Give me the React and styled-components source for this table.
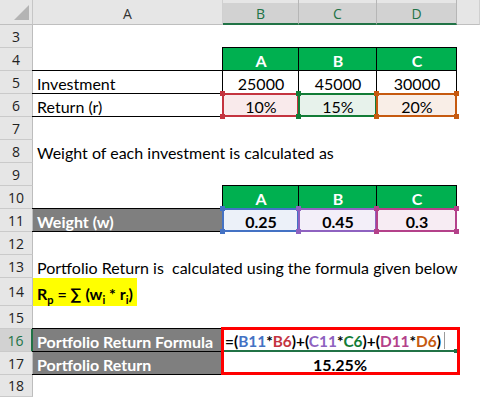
import React from "react";
import styled, { createGlobalStyle } from "styled-components";

const GlobalStyle = createGlobalStyle`
  html, body {
    margin: 0;
    padding: 0;
    background: #ffffff;
  }
`;

const CELL_FONT = `"Lato", "Open Sans", sans-serif`;
const HEAD_FONT = `"Open Sans", "Noto Sans", sans-serif`;
const EXCEL_GREEN = "#217346";

const tones = {
  blue: "#4472c4",
  red: "#c4343f",
  purple: "#8e62c0",
  green: "#127c36",
  magenta: "#b4418a",
  orange: "#c65a10",
};

const Sheet = styled.div`
  display: grid;
  grid-template-columns: 33px 190px 76px 78px 80px 23px;
  grid-template-rows: 25px repeat(11, 23px) 28px 23px 23px 23px 22px;
  width: 480px;
  height: 397px;
  overflow: hidden;
  background: #ffffff;
  font-family: ${CELL_FONT};
`;

const Corner = styled.div`
  grid-column: 1;
  grid-row: 1;
  display: flex;
  align-items: flex-end;
  justify-content: flex-end;
  padding: 0 3px 4px 0;
  background: #e6e6e6;
  border-right: 1px solid #c6c6c6;
  border-bottom: 1px solid #bfbfbf;
  box-sizing: border-box;
`;

const ColHead = styled.div`
  grid-column: ${(p) => p.$col};
  grid-row: 1;
  display: flex;
  align-items: center;
  justify-content: center;
  box-sizing: border-box;
  padding-top: 3px;
  font-family: ${HEAD_FONT};
  font-size: 14px;
  color: ${(p) => (p.$active ? EXCEL_GREEN : "#333333")};
  background: ${(p) => (p.$active ? "#d2d2d2" : "#e6e6e6")};
  box-shadow: inset 0 3px 0 #e6e6e6;
  border-right: 1px solid ${(p) => (p.$active ? "#b6b6b6" : "#d0d0d0")};
  border-bottom: ${(p) => (p.$active ? `2px solid ${EXCEL_GREEN}` : "1px solid #bfbfbf")};
`;

const RowHead = styled.div`
  grid-column: 1;
  grid-row: ${(p) => p.$row - 1};
  display: flex;
  align-items: center;
  justify-content: center;
  box-sizing: border-box;
  font-family: ${HEAD_FONT};
  font-size: 14px;
  color: ${(p) => (p.$active ? EXCEL_GREEN : "#222222")};
  background: ${(p) => (p.$active ? "#d2d2d2" : "#e6e6e6")};
  border-bottom: 1px solid #cacaca;
  border-right: ${(p) => (p.$active ? `2px solid ${EXCEL_GREEN}` : "1px solid #bdbdbd")};
`;

const Cell = styled.div`
  grid-column: ${(p) => p.$col} / span ${(p) => p.$span || 1};
  grid-row: ${(p) => p.$row - 1} / span ${(p) => p.$rows || 1};
  position: relative;
  display: flex;
  align-items: center;
  justify-content: ${(p) => (p.$center ? "center" : "flex-start")};
  padding: ${(p) => (p.$flush ? "0" : "2px 4px 0")};
  min-width: 0;
  white-space: nowrap;
  font-size: 16px;
  font-weight: ${(p) => (p.$bold ? 700 : 400)};
  color: ${(p) => p.$fg || "#000000"};
  background: ${(p) => p.$bg || "transparent"};

  &::after {
    content: "";
    position: absolute;
    inset: -1px 0 0 -1px;
    pointer-events: none;
    border-top: ${(p) => (p.$edges?.includes("t") ? "1px solid #000" : "0")};
    border-bottom: ${(p) => (p.$edges?.includes("b") ? "1px solid #000" : "0")};
    border-left: ${(p) => (p.$edges?.includes("l") ? "1px solid #000" : "0")};
    border-right: ${(p) => (p.$edges?.includes("r") ? "1px solid #000" : "0")};
  }
`;

const HeaderCell = styled(Cell).attrs({ $center: true, $bold: true, $edges: "tblr" })`
  background: #00b050;
  color: #ffffff;
`;

const LabelCell = styled(Cell).attrs({ $bold: true, $edges: "tb" })`
  background: #7f7f7f;
  color: #ffffff;
`;

const RefCell = styled(Cell).attrs({ $center: true })`
  background: ${(p) => tones[p.$tone]}1a;

  &::after {
    border: 2px solid ${(p) => tones[p.$tone]};
  }
`;

const Handle = styled.span`
  position: absolute;
  z-index: 1;
  width: 5px;
  height: 5px;
  background: ${(p) => tones[p.$tone]};
  ${(p) => (p.$pos.includes("t") ? "top: -3px;" : "bottom: -2px;")}
  ${(p) => (p.$pos.includes("l") ? "left: -3px;" : "right: -2px;")}
`;

const Marker = styled.span`
  display: flex;
  align-items: center;
  height: 100%;
  padding: 2px 4px 0;
  box-sizing: border-box;
  background: #ffff00;
  font-weight: 700;
`;

const Sub = styled.sub`
  font-size: 11px;
  vertical-align: -4px;
  line-height: 0;
`;

const FormulaBox = styled.div`
  grid-column: 3 / span 3;
  grid-row: 15 / span 2;
  position: relative;
  display: grid;
  grid-template-rows: 23px 23px;
  font-size: 16px;
  font-weight: 700;
  color: #000000;

  &::after {
    content: "";
    position: absolute;
    top: -2px;
    left: -2px;
    right: -3px;
    bottom: 0;
    border: 3px solid #ff0000;
    pointer-events: none;
  }
`;

const FormulaLine = styled.div`
  position: relative;
  display: flex;
  align-items: center;
  padding: 2px 0 0 2px;
  border-bottom: 2px solid ${EXCEL_GREEN};
  white-space: nowrap;
  font-size: 15.4px;
`;

const ResultLine = styled.div`
  display: flex;
  align-items: center;
  justify-content: center;
  padding-top: 2px;
`;

const Ref = styled.span`
  color: ${(p) => tones[p.$tone]};
`;

const Caret = styled.span`
  width: 1px;
  height: 17px;
  margin-left: 3px;
  background: #9a9a9a;
`;

const FillDot = styled.span`
  position: absolute;
  right: -1px;
  bottom: -3px;
  width: 4px;
  height: 4px;
  background: ${EXCEL_GREEN};
`;

const corners = ["tl", "tr", "bl", "br"];

const RefBox = ({ col, row, tone, children }) => (
  <RefCell $col={col} $row={row} $tone={tone} $bold={row === 11}>
    {children}
    {corners.map((c) => (
      <Handle key={c} $pos={c} $tone={tone} />
    ))}
  </RefCell>
);

const rowNumbers = [3, 4, 5, 6, 7, 8, 9, 10, 11, 12, 13, 14, 15, 16, 17, 18];

export default function App() {
  return (
    <>
      <GlobalStyle />
      <Sheet>
        <Corner>
          <svg width="15" height="15" viewBox="0 0 15 15">
            <polygon points="15,0 15,15 0,15" fill="#b4b4b4" />
          </svg>
        </Corner>
        <ColHead $col={2}>A</ColHead>
        <ColHead $col={3} $active>B</ColHead>
        <ColHead $col={4} $active>C</ColHead>
        <ColHead $col={5} $active>D</ColHead>
        <ColHead $col={6} />

        {rowNumbers.map((n) => (
          <RowHead key={n} $row={n} $active={n === 16}>
            {n}
          </RowHead>
        ))}

        <HeaderCell $col={3} $row={4}>A</HeaderCell>
        <HeaderCell $col={4} $row={4}>B</HeaderCell>
        <HeaderCell $col={5} $row={4}>C</HeaderCell>

        <Cell $col={2} $row={5} $edges="tbr">Investment</Cell>
        <Cell $col={3} $row={5} $edges="tblr" $center>25000</Cell>
        <Cell $col={4} $row={5} $edges="tblr" $center>45000</Cell>
        <Cell $col={5} $row={5} $edges="tblr" $center>30000</Cell>

        <Cell $col={2} $row={6} $edges="br">Return (r)</Cell>
        <RefBox col={3} row={6} tone="red">10%</RefBox>
        <RefBox col={4} row={6} tone="green">15%</RefBox>
        <RefBox col={5} row={6} tone="orange">20%</RefBox>

        <Cell $col={2} $row={8} $span={5}>Weight of each investment is calculated as</Cell>

        <HeaderCell $col={3} $row={10}>A</HeaderCell>
        <HeaderCell $col={4} $row={10}>B</HeaderCell>
        <HeaderCell $col={5} $row={10}>C</HeaderCell>

        <LabelCell $col={2} $row={11}>Weight (w)</LabelCell>
        <RefBox col={3} row={11} tone="blue">0.25</RefBox>
        <RefBox col={4} row={11} tone="purple">0.45</RefBox>
        <RefBox col={5} row={11} tone="magenta">0.3</RefBox>

        <Cell $col={2} $row={13} $span={5}>
          Portfolio Return is&nbsp; calculated using the formula given below
        </Cell>

        <Cell $col={2} $row={14} $flush>
          <Marker>
            <span>
              R<Sub>p</Sub> = ∑ (w<Sub>i</Sub> * r<Sub>i</Sub>)
            </span>
          </Marker>
        </Cell>

        <LabelCell $col={2} $row={16}>Portfolio Return Formula</LabelCell>
        <LabelCell $col={2} $row={17}>Portfolio Return</LabelCell>

        <FormulaBox>
          <FormulaLine>
            <span>
              =(<Ref $tone="blue">B11</Ref>*<Ref $tone="red">B6</Ref>)+(<Ref $tone="purple">C11</Ref>*<Ref $tone="green">C6</Ref>)+(<Ref $tone="magenta">D11</Ref>*<Ref $tone="orange">D6</Ref>)
            </span>
            <Caret />
            <FillDot />
          </FormulaLine>
          <ResultLine>15.25%</ResultLine>
        </FormulaBox>
      </Sheet>
    </>
  );
}
